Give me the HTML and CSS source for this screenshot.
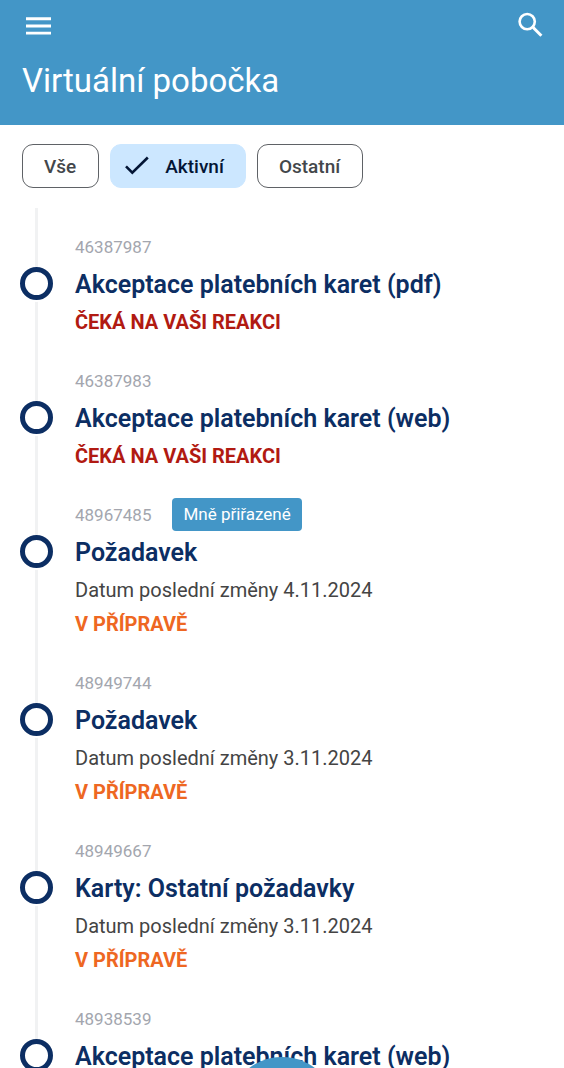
FILE: index.html
```html
<!DOCTYPE html>
<html lang="cs">
<head>
<meta charset="utf-8">
<meta name="viewport" content="width=device-width, initial-scale=1">
<title>Virtuální pobočka</title>
<link rel="stylesheet" href="styles.css">
</head>
<body>
<div class="app">
  <header class="header">
    <div class="toolbar">
      <button class="icon-button" type="button" aria-label="Menu">
        <svg width="32" height="32" viewBox="0 0 32 32" fill="#fff"><path d="M4 7.3h25v2.9H4zM4 14.5h25v2.9H4zM4 21.7h25v2.9H4z"/></svg>
      </button>
      <button class="icon-button" type="button" aria-label="Hledat">
        <svg width="32" height="32" viewBox="0 0 32 32" fill="none" stroke="#fff" stroke-width="2.6"><circle cx="13.2" cy="11.6" r="7.6"/><path d="M18.6 17l2 1.2" stroke-width="2.6"/><path d="M19.4 17.8l8 8" stroke-width="3"/></svg>
      </button>
    </div>
    <h1 class="page-title">Virtuální pobočka</h1>
  </header>
  <nav class="filters" aria-label="Filtr požadavků">
    <button class="chip" type="button">Vše</button>
    <button class="chip chip-active" type="button" aria-pressed="true"><svg width="24" height="20" viewBox="0 0 24 20" fill="none" stroke="#031535" stroke-width="2.6"><path d="M1 10.3l6.3 6.3L22.8 1.5"/></svg>Aktivní</button>
    <button class="chip" type="button">Ostatní</button>
  </nav>
  <main class="content">
    <ol class="timeline">
      <li class="item">
        <span class="rail"><span class="dot"></span></span>
        <div class="details">
          <div class="meta">46387987</div>
          <h2 class="name">Akceptace platebních karet (pdf)</h2>
          <p class="status status-waiting">ČEKÁ NA VAŠI REAKCI</p>
        </div>
      </li>
      <li class="item">
        <span class="rail"><span class="dot"></span></span>
        <div class="details">
          <div class="meta">46387983</div>
          <h2 class="name">Akceptace platebních karet (web)</h2>
          <p class="status status-waiting">ČEKÁ NA VAŠI REAKCI</p>
        </div>
      </li>
      <li class="item">
        <span class="rail"><span class="dot"></span></span>
        <div class="details">
          <div class="meta">48967485 <span class="tag">Mně přiřazené</span></div>
          <h2 class="name">Požadavek</h2>
          <p class="date">Datum poslední změny 4.11.2024</p>
          <p class="status status-progress">V PŘÍPRAVĚ</p>
        </div>
      </li>
      <li class="item">
        <span class="rail"><span class="dot"></span></span>
        <div class="details">
          <div class="meta">48949744</div>
          <h2 class="name">Požadavek</h2>
          <p class="date">Datum poslední změny 3.11.2024</p>
          <p class="status status-progress">V PŘÍPRAVĚ</p>
        </div>
      </li>
      <li class="item">
        <span class="rail"><span class="dot"></span></span>
        <div class="details">
          <div class="meta">48949667</div>
          <h2 class="name">Karty: Ostatní požadavky</h2>
          <p class="date">Datum poslední změny 3.11.2024</p>
          <p class="status status-progress">V PŘÍPRAVĚ</p>
        </div>
      </li>
      <li class="item">
        <span class="rail"><span class="dot"></span></span>
        <div class="details">
          <div class="meta">48938539</div>
          <h2 class="name">Akceptace platebních karet (web)</h2>
        </div>
      </li>
    </ol>
  </main>
  <button class="fab" type="button" aria-label="Nový požadavek"></button>
</div>
</body>
</html>
```
FILE: styles.css
```css
* {
  box-sizing: border-box;
}

body {
  margin: 0;
  background: #fff;
  font-family: Roboto, "Noto Sans", sans-serif;
}

h1, h2, p, ol {
  margin: 0;
  padding: 0;
}

button {
  font-family: inherit;
  cursor: pointer;
}

.app {
  display: flex;
  flex-direction: column;
  height: 100vh;
  overflow: hidden;
}

.header {
  background: #4396c7;
  color: #fff;
  padding: 10px 18px 20px 22px;
}

.toolbar {
  display: flex;
  justify-content: space-between;
}

.icon-button {
  display: block;
  padding: 0;
  border: 0;
  background: none;
  height: 32px;
}

.icon-button svg {
  display: block;
}

.page-title {
  padding-top: 15px;
  font-size: 33px;
  line-height: 48px;
  font-weight: 400;
}

.filters {
  display: flex;
  gap: 11px;
  padding: 19px 22px 20px;
}

.chip {
  display: flex;
  align-items: center;
  gap: 16px;
  height: 44px;
  padding: 0 22px 0 21px;
  border: 1px solid #5f6266;
  border-radius: 11px;
  background: #fff;
  color: #43474b;
  font-size: 19px;
  font-weight: 500;
}

.chip-active {
  padding: 0 21px 0 14px;
  border-color: #cce7ff;
  background: #cce7ff;
  color: #031535;
}

.content {
  flex: 1;
  min-height: 0;
  overflow: hidden;
}

.timeline {
  list-style: none;
}

.item {
  display: flex;
  gap: 22px;
  padding-left: 20px;
}

.rail {
  display: flex;
  flex: none;
  width: 33px;
  padding-top: 59px;
  background: linear-gradient(#f1f2f3, #f1f2f3) center / 3px 100% no-repeat;
}

.dot {
  width: 33px;
  height: 33px;
  border: 5px solid #0c2e63;
  border-radius: 50%;
  background: #fff;
  box-shadow: 0 2px 0 #fff;
}

.item:last-child .rail {
  background-size: 3px 76px;
  background-position: center top;
}

.details {
  flex: 1;
  padding: 21px 0 3px;
}

.meta {
  display: flex;
  align-items: center;
  gap: 21px;
  height: 35px;
  color: #a3a6ae;
  font-size: 17px;
}

.tag {
  padding: 0 11px;
  border-radius: 4px;
  background: #4396c7;
  color: #fff;
  line-height: 33px;
}

.name {
  color: #0c2e63;
  font-size: 25px;
  line-height: 41px;
  font-weight: 600;
}

.date,
.status {
  font-size: 20px;
  line-height: 34px;
}

.date {
  color: #444;
}

.status {
  font-weight: 700;
}

.status-waiting {
  color: #b11a12;
}

.status-progress {
  color: #ee6722;
}

.fab {
  position: fixed;
  bottom: -99px;
  left: 50%;
  width: 110px;
  height: 110px;
  margin-left: -55px;
  border: 0;
  border-radius: 50%;
  background: #4396c7;
}
```
